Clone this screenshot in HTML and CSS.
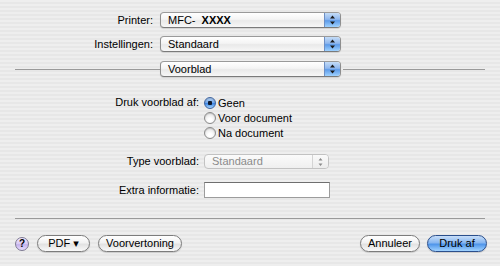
FILE: index.html
```html
<html>
  <head>
    <title>Druk af</title>
    <link rel="stylesheet" href="styles.css">
  </head>
  <body>
    <div class="sheet">
      <div class="top-form">
        <span class="label">Printer:</span>
        <div class="popup">
          <span class="popup-text">MFC- &nbsp;<b>XXXX</b></span>
          <span class="popup-arrows"><svg width="7" height="10" viewBox="0 0 7 10"><path d="M3.5 0.5 L6 3.5 L1 3.5 Z M1 6.5 L6 6.5 L3.5 9.5 Z"/></svg></span>
        </div>
        <span class="label">Instellingen:</span>
        <div class="popup">
          <span class="popup-text">Standaard</span>
          <span class="popup-arrows"><svg width="7" height="10" viewBox="0 0 7 10"><path d="M3.5 0.5 L6 3.5 L1 3.5 Z M1 6.5 L6 6.5 L3.5 9.5 Z"/></svg></span>
        </div>
      </div>

      <div class="pane-divider">
        <span class="rule rule-left"></span>
        <div class="popup">
          <span class="popup-text">Voorblad</span>
          <span class="popup-arrows"><svg width="7" height="10" viewBox="0 0 7 10"><path d="M3.5 0.5 L6 3.5 L1 3.5 Z M1 6.5 L6 6.5 L3.5 9.5 Z"/></svg></span>
        </div>
        <span class="rule rule-right"></span>
      </div>

      <div class="pane-form">
        <span class="label label-top">Druk voorblad af:</span>
        <div class="radio-group">
          <label class="radio-row"><span class="radio checked"></span>Geen</label>
          <label class="radio-row"><span class="radio"></span>Voor document</label>
          <label class="radio-row"><span class="radio"></span>Na document</label>
        </div>

        <span class="label label-type">Type voorblad:</span>
        <div class="popup small disabled">
          <span class="popup-text">Standaard</span>
          <span class="popup-arrows"><svg width="7" height="10" viewBox="0 0 7 10"><path d="M3.5 1 L5.5 3.5 L1.5 3.5 Z M1.5 6.5 L5.5 6.5 L3.5 9 Z"/></svg></span>
        </div>

        <span class="label label-extra">Extra informatie:</span>
        <input class="text-field label-extra" type="text">
      </div>

      <div class="bottom-rule"></div>

      <div class="button-bar">
        <div class="button-group">
          <span class="help-btn">?</span>
          <span class="btn btn-pdf">PDF &#9662;</span>
          <span class="btn btn-preview">Voorvertoning</span>
        </div>
        <div class="button-group">
          <span class="btn btn-cancel">Annuleer</span>
          <span class="btn btn-default">Druk af</span>
        </div>
      </div>
    </div>
  </body>
</html>
```

FILE: styles.css
```css
* {
  margin: 0;
  padding: 0;
  box-sizing: border-box;
}
body {
  width: 500px;
  height: 266px;
  overflow: hidden;
  font-family: "Liberation Sans", "DejaVu Sans", sans-serif;
  font-size: 11px;
  color: #000;
  background: repeating-linear-gradient(#eeeeee 0 2px, #e7e7e7 2px 4px);
}
.sheet {
  padding-top: 12px;
}
.top-form {
  display: grid;
  grid-template-columns: 153px 181px;
  column-gap: 7px;
  row-gap: 8px;
  grid-auto-rows: 16px;
  align-items: center;
}
.label {
  text-align: right;
  white-space: nowrap;
}

/* popup menu */
.popup {
  display: flex;
  height: 16px;
  width: 181px;
  border: 1px solid #8e8e8e;
  border-top-color: #9a9a9a;
  border-bottom-color: #7a7a7a;
  border-radius: 4px;
  overflow: hidden;
  background: linear-gradient(#ffffff 0%, #f4f4f4 45%, #e9e9e9 55%, #f7f7f7 100%);
  box-shadow: 0 1px 1px rgba(0, 0, 0, 0.12);
}
.popup-text {
  flex: 1;
  padding-left: 7px;
  line-height: 14px;
  white-space: nowrap;
}
.popup-arrows {
  width: 16px;
  display: flex;
  align-items: center;
  justify-content: center;
  border-left: 1px solid #6d8fc4;
  background: linear-gradient(#c4dcf7 0%, #8fb7ee 45%, #5d9be9 55%, #9fd2ff 100%);
}
.popup-arrows svg {
  fill: #1a1a1a;
}
.popup.small {
  width: 125px;
  height: 15px;
}
.popup.small .popup-text {
  line-height: 13px;
}
.popup.disabled {
  border-color: #c2c2c2;
  box-shadow: none;
  background: linear-gradient(#fbfbfb, #efefef);
}
.popup.disabled .popup-text {
  color: #8b8b8b;
}
.popup.disabled .popup-arrows {
  border-left: 1px solid #d4d4d4;
  background: linear-gradient(#fafafa, #ececec);
}
.popup.disabled .popup-arrows svg {
  fill: #8a8a8a;
}

/* pane selector with lines */
.pane-divider {
  display: flex;
  align-items: center;
  margin-top: 9px;
  padding-left: 15px;
}
.rule {
  height: 1px;
  background: #9a9a9a;
}
.rule-left {
  width: 145px;
}
.rule-right {
  width: 142px;
  margin-left: 2px;
}

/* pane contents */
.pane-form {
  display: grid;
  grid-template-columns: 199px auto;
  column-gap: 5px;
  margin-top: 18px;
}
.label-top {
  line-height: 15px;
}
.radio-group {
  display: flex;
  flex-direction: column;
}
.radio-row {
  display: flex;
  align-items: center;
  height: 15px;
  gap: 2px;
}
.radio {
  width: 12px;
  height: 12px;
  border-radius: 50%;
  border: 1px solid #8a8a8a;
  background: radial-gradient(circle at 50% 70%, #ffffff 20%, #e3e3e3 80%);
  box-shadow: inset 0 1px 1px rgba(0, 0, 0, 0.15);
}
.radio.checked {
  border-color: #40649e;
  background: radial-gradient(circle at 50% 50%, #0f1a2e 0 2px, transparent 2.5px),
    linear-gradient(#b7d4f6 0%, #6ea5ea 50%, #3e86e3 55%, #a7d6ff 100%);
}
.label-type {
  margin-top: 14px;
  line-height: 15px;
}
.pane-form .popup.small {
  margin-top: 14px;
}
.label-extra {
  margin-top: 13px;
  line-height: 16px;
}
.text-field {
  width: 126px;
  height: 16px;
  border: 1px solid #9c9c9c;
  border-top-color: #6f6f6f;
  background: #fff;
  outline: none;
}

.bottom-rule {
  height: 1px;
  margin: 20px 15px 0 15px;
  background: #9a9a9a;
}

/* bottom buttons */
.button-bar {
  display: flex;
  justify-content: space-between;
  margin-top: 16px;
  padding: 0 13px 0 15px;
}
.button-group {
  display: flex;
  align-items: center;
  gap: 7px;
}
.help-btn {
  width: 14px;
  height: 14px;
  border-radius: 50%;
  border: 1px solid #7d7892;
  background: linear-gradient(#f1e9ff 0%, #d7c8f4 50%, #c4b2ec 55%, #e7dcff 100%);
  font-size: 10px;
  font-weight: bold;
  line-height: 12px;
  text-align: center;
  margin-right: 1px;
}
.btn {
  height: 17px;
  border-radius: 9px;
  border: 1px solid #7c7c7c;
  background: linear-gradient(#ffffff 0%, #f2f2f2 45%, #e2e2e2 55%, #f9f9f9 100%);
  box-shadow: 0 1px 1px rgba(0, 0, 0, 0.15);
  text-align: center;
  line-height: 15px;
  white-space: nowrap;
}
.btn-pdf {
  width: 53px;
}
.btn-preview {
  width: 84px;
  margin-left: 1px;
}
.btn-cancel {
  width: 60px;
}
.btn-default {
  width: 60px;
  border-color: #2b4f8c;
  background: linear-gradient(#c7def9 0%, #87b6f0 45%, #4f95ea 55%, #a1d3ff 100%);
}
```
